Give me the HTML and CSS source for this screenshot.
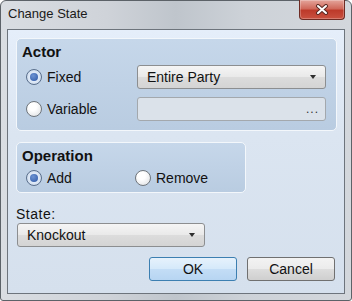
FILE: index.html
```html
<!DOCTYPE html>
<html lang='en'>

<head>
  <meta charset='utf-8'>
  <title>Change State</title>
  <link rel="stylesheet" href="styles.css">
</head>

<body>
  <div class="window">
    <div class="titlebar">
      <span class="title">Change State</span>
      <span class="close">
        <svg width="14" height="11" viewBox="0 0 14 11">
          <path d="M3 2 L11 9 M11 2 L3 9" stroke="#5b2a24" stroke-width="4" stroke-linecap="round" />
          <path d="M3 2 L11 9 M11 2 L3 9" stroke="#fff" stroke-width="2" stroke-linecap="round" />
        </svg>
      </span>
    </div>
    <div class="client">
      <div class="group actor">
        <div class="group-title">Actor</div>
        <div class="row">
          <label class="opt"><span class="radio on"></span>Fixed</label>
          <div class="combo">Entire Party<span class="arrow"></span></div>
        </div>
        <div class="row">
          <label class="opt"><span class="radio"></span>Variable</label>
          <div class="field">...</div>
        </div>
      </div>
      <div class="group operation">
        <div class="group-title">Operation</div>
        <div class="ops">
          <label class="opt"><span class="radio on"></span>Add</label>
          <label class="opt"><span class="radio"></span>Remove</label>
        </div>
      </div>
      <div class="label">State:</div>
      <div class="combo state">Knockout<span class="arrow"></span></div>
      <div class="buttons">
        <button class="btn default">OK</button>
        <button class="btn">Cancel</button>
      </div>
    </div>
  </div>
</body>

</html>
```

FILE: styles.css
```css
* {
  margin: 0;
  padding: 0;
  box-sizing: border-box;
}

body {
  font-family: "Liberation Sans", Arial, sans-serif;
  font-size: 14px;
  color: #111;
  background: #fff;
}

.window {
  width: 352px;
  height: 301px;
  border: 1px solid #5c6268;
  border-radius: 6px 6px 3px 3px;
  padding: 0 6px 6px;
  display: flex;
  flex-direction: column;
  background: linear-gradient(to right, #d9dde2 0%, #cfd3d9 30%, #bfc5cc 50%, #cdd2d8 70%, #d3d7dc 100%);
}

.titlebar {
  height: 28px;
  display: flex;
  justify-content: space-between;
  align-items: flex-start;
}

.title {
  font-size: 13px;
  line-height: 16px;
  margin: 5px 0 0 1px;
  color: #1a1a1a;
}

.close {
  width: 46px;
  height: 20px;
  margin-top: -1px;
  border: 1px solid #6e2b23;
  border-top: none;
  border-radius: 0 0 4px 4px;
  background: linear-gradient(#e4a59b, #d0695b 45%, #bd3a2a 55%, #c95140);
  display: flex;
  align-items: center;
  justify-content: center;
  box-shadow: inset 0 0 0 1px rgba(255, 255, 255, 0.25);
}

.client {
  flex: 1;
  border: 1px solid #6d747c;
  background: linear-gradient(#e5eefa, #dbe5f1 40%, #d5e0ed);
  padding-top: 8px;
}

.group {
  margin: 0 7px 0 8px;
  border: 1px solid #f3f7fb;
  border-radius: 5px;
  background: linear-gradient(#c6d7ea, #b9cce1);
  padding: 4px 10px 0 5px;
}

.group-title {
  font-weight: bold;
  font-size: 15px;
  line-height: 18px;
}

.actor {
  padding-bottom: 9px;
}

.actor .row {
  display: grid;
  grid-template-columns: 111px 1fr;
  align-items: center;
  height: 24px;
  padding-left: 4px;
  margin-top: 4px;
}

.actor .row + .row {
  margin-top: 8px;
}

.opt {
  display: flex;
  align-items: center;
  gap: 5px;
  line-height: 17px;
}

.radio {
  width: 16px;
  height: 16px;
  border-radius: 50%;
  border: 1px solid #6f757b;
  background: radial-gradient(circle at 40% 35%, #ffffff 30%, #e4e6e8 80%);
  display: flex;
  align-items: center;
  justify-content: center;
  flex: none;
}

.radio.on {
  border-color: #5a6f8c;
  background: radial-gradient(circle, #dfe9f6 50%, #b9cbe2);
}

.radio.on::after {
  content: "";
  width: 8px;
  height: 8px;
  border-radius: 50%;
  background: radial-gradient(circle at 40% 35%, #6d93d3, #2d57a4);
}

.combo {
  height: 24px;
  border: 1px solid #8c8e90;
  border-radius: 3px;
  background: linear-gradient(#f5f5f5, #e9e9e9 50%, #dcdcdc 51%, #d4d4d4);
  display: flex;
  align-items: center;
  justify-content: space-between;
  padding: 0 9px 0 9px;
  line-height: 17px;
}

.arrow {
  width: 0;
  height: 0;
  border-left: 3.5px solid transparent;
  border-right: 3.5px solid transparent;
  border-top: 4px solid #2e2e2e;
}

.field {
  height: 24px;
  border: 1px solid #a3a8ad;
  border-radius: 3px;
  background: #dbe2ea;
  display: flex;
  align-items: center;
  justify-content: flex-end;
  padding-right: 6px;
  font-size: 12px;
  letter-spacing: 1px;
  color: #333;
}

.operation {
  width: 230px;
  margin-top: 11px;
  padding-bottom: 4px;
}

.ops {
  display: grid;
  grid-template-columns: 109px 1fr;
  align-items: center;
  height: 20px;
  margin-top: 3px;
  padding-left: 4px;
}

.label {
  margin: 13px 0 0 8px;
  line-height: 17px;
  letter-spacing: 0.5px;
}

.combo.state {
  width: 188px;
  margin-left: 9px;
}

.buttons {
  display: flex;
  justify-content: flex-end;
  gap: 10px;
  margin: 10px 9px 0 0;
}

.btn {
  width: 88px;
  height: 24px;
  font-family: "Liberation Sans", Arial, sans-serif;
  font-size: 14px;
  color: #111;
  border: 1px solid #707070;
  border-radius: 3px;
  background: linear-gradient(#f3f3f3, #ebebeb 50%, #dddddd 51%, #cfcfcf);
}

.btn.default {
  border-color: #3c7fb1;
  background: linear-gradient(#e6f2fc, #d5e9fa 50%, #c3ddf6 51%, #b7d5f2);
}
```
